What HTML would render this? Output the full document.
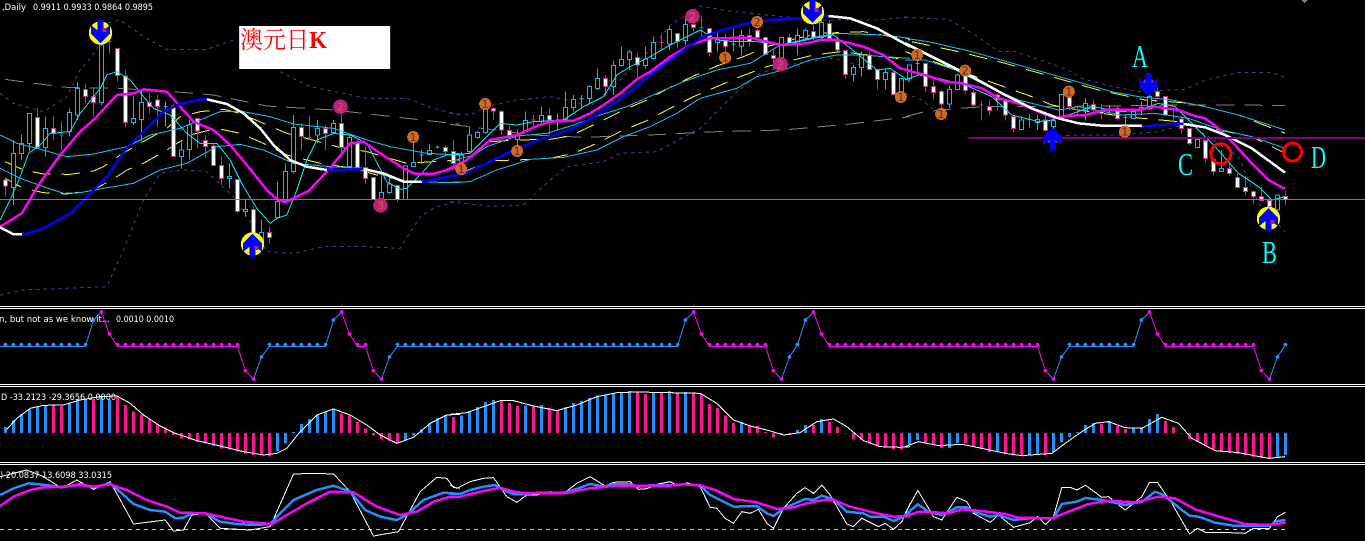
<!DOCTYPE html>
<html><head><meta charset="utf-8"><title>澳元日K</title>
<style>
html,body{margin:0;padding:0;background:#000;width:1365px;height:541px;overflow:hidden}
svg{display:block;position:absolute;left:0;top:0}
path{fill:none;shape-rendering:crispEdges}
.pw{stroke:#ff1493;stroke-width:3}
.bw{stroke:#10b8f8;stroke-width:3}
.pb{stroke:#ff1493;stroke-width:3;fill:#fff}
.bb{stroke:#10b8f8;stroke-width:3;fill:#000}
.fast{stroke:#00e8f0;stroke-width:3}
.env{stroke:#10c0f8;stroke-width:3}
.yel{stroke:#ffff00;stroke-width:3;stroke-dasharray:55 33}
.gry{stroke:#808080;stroke-width:3;stroke-dasharray:55 30}
.pur{stroke:#483d8b;stroke-width:3;stroke-dasharray:10 12}
.mag{stroke:#ff00ff;stroke-width:7.5}
.blu{stroke:#0000ff;stroke-width:7.5}
.wht{stroke:#fff;stroke-width:7.5}
.thin{stroke:#fff;stroke-width:3}
.dodg{stroke:#1e90ff;stroke-width:3}
.pm{stroke:#ff00ff;stroke-width:3}
.dd{stroke:#1e90ff;stroke-width:11;stroke-linecap:round;stroke-dasharray:.01 24}
.dm{stroke:#ff00ff;stroke-width:11;stroke-linecap:round;stroke-dasharray:.01 24}
.hb{stroke:#1e90ff;stroke-width:9}
.hp{stroke:#ff1493;stroke-width:9}
.m2{stroke:#1e90ff;stroke-width:7.5}
.m3{stroke:#ff00ff;stroke-width:7.5}
text{font-family:"DejaVu Sans",sans-serif;font-size:9px;fill:#fff}
.o{fill:#d2691e;shape-rendering:crispEdges}
.k{fill:#bd1f80;shape-rendering:crispEdges}
.n{font-size:33px;text-anchor:middle}
</style></head><body>
<svg width="1365" height="541" viewBox="0 0 1365 541" xmlns="http://www.w3.org/2000/svg">
<defs>
<path id="dn" style="fill:#0000ff;stroke:none" d="M-9-39H9V-8L29-24V1L0 31-29 1V-24L-9-8Z"/>
</defs>
<rect width="1365" height="541" fill="#000"/>

<!-- MAIN zone 1 -->
<g transform="translate(.167 0) scale(.33333)">
<path class="pur" d="M0 280L40 310 130 335 200 290 240 210 290 150 320 70 360 60 430 110 500 148 620 148 700 120"/>
<path class="pur" d="M840 215L930 260 1030 280 1100 295 1220 295 1300 325 1380 345"/>
<path class="pur" d="M0 885L70 870 320 860 370 750 430 600 480 520 550 510 620 515 700 590 760 680 800 755 880 760 970 740 1100 740 1200 745 1260 650 1300 625 1380 600"/>
<path class="gry" d="M15 238L100 250 200 262 355 265 520 275 640 285 800 318 1000 330 1380 373"/>
<path class="yel" d="M15 485L70 510 130 522 210 523 280 513 310 500 360 465 420 430 500 385 540 350 600 335 670 328 720 340 790 370 860 400 900 410 1010 440 1100 455 1220 490 1380 480"/>
<path class="yel" d="M15 535L70 565 130 578 200 582 280 570 350 530 380 510 430 490 500 450 570 405 650 385 720 400 790 430 860 465 960 490 1060 505 1130 525 1230 545"/>
<path class="pw" d="M16 535V590M112 322V445M160 350V420M184 365V450M256 250V310M280 265V350M328 120V160M352 145V245M376 210V382M448 280V340M472 285V380M520 310V470M592 355V445M616 405V473M640 430V500M664 470V555M712 538V640M760 620V740M808 680V730M904 370V452M928 350V420M976 375V450M1024 340V470M1072 420V505M1096 440V552M1120 532V600M1192 557V606M1336 436V460M1360 420V495M178 405h12M322 125h12M922 412h12"/>
<path class="pb" d="M10 540h12V558h-12zM106 352h12V442h-12zM154 385h12V400h-12zM250 268h12V290h-12zM274 290h12V308h-12zM346 145h12V226h-12zM370 228h12V368h-12zM442 308h12V320h-12zM466 300h12V320h-12zM514 318h12V470h-12zM586 355h12V393h-12zM610 422h12V440h-12zM634 438h12V496h-12zM658 496h12V535h-12zM706 538h12V635h-12zM754 628h12V700h-12zM802 697h12V712h-12zM898 382h12V410h-12zM970 385h12V400h-12zM1018 370h12V442h-12zM1066 428h12V502h-12zM1090 503h12V536h-12zM1114 532h12V598h-12zM1186 557h12V598h-12zM1330 443h12V455h-12zM1354 455h12V490h-12z"/>
<path class="bw" d="M40 420V615M64 403V480M88 340V455M136 350V470M208 325V410M232 247V360M304 60V315M400 290V375M424 270V425M496 305V380M544 420V505M568 360V478M688 490V565M736 595V650M784 660V740M832 545V652M856 490V600M880 345V520M952 360V430M1000 360V400M1048 405V500M1144 520V600M1168 530V582M1216 498V600M1240 410V500M1264 450V490M1288 432V463M1312 436V446M490 320h12M1258 465h12M1306 441h12"/>
<path class="bb" d="M34 460h12V562h-12zM58 430h12V460h-12zM82 340h12V430h-12zM130 385h12V442h-12zM202 337h12V395h-12zM226 265h12V345h-12zM298 135h12V308h-12zM394 355h12V368h-12zM418 307h12V358h-12zM538 450h12V470h-12zM562 375h12V448h-12zM682 530h12V535h-12zM730 628h12V635h-12zM778 697h12V730h-12zM826 605h12V652h-12zM850 514h12V600h-12zM874 382h12V514h-12zM946 385h12V405h-12zM994 370h12V397h-12zM1042 412h12V500h-12zM1138 577h12V598h-12zM1162 552h12V578h-12zM1210 498h12V598h-12zM1234 487h12V500h-12zM1282 452h12V463h-12z"/>
<path class="env" d="M0 405L50 430 110 445 200 470 280 462 380 440 450 405 540 385 600 360 660 335 730 335 810 350 880 372 1000 385 1100 420 1170 440 1280 460 1380 465"/>
<path class="env" d="M0 505L60 535 130 560 190 580 240 578 310 565 400 550 480 510 560 490 650 440 720 433 790 450 880 490 990 500 1090 505 1150 525 1220 545 1380 548"/>
<path class="fast" d="M0 660L30 600 60 530 85 460 120 435 150 400 210 395 240 340 300 265 320 225 350 215 390 240 430 290 460 325 510 345 560 400 600 430 650 430 690 480 730 560 770 625 810 670 830 655 860 645 890 570 920 480 950 420 1000 400 1050 405 1100 430 1160 545 1200 568 1220 565 1260 525 1300 480 1340 465 1380 460"/>
<path class="mag" d="M0 680L65 640 115 555 180 465 240 395 285 355 350 285 400 280 430 268 500 275 540 320 580 365 640 390 690 435 740 495 800 570 830 597 855 607 925 573 985 510 1050 430 1090 425 1140 460 1210 505 1245 522 1300 522 1380 497"/>
<path class="wht" d="M0 682L40 703H66"/>
<path class="blu" d="M66 705L130 685 210 640 260 590 320 530 375 450 430 395 490 335 540 312 600 298H620"/>
<path class="wht" d="M620 298L680 312 730 340 780 385 820 435 870 480 920 500 980 510"/>
<path class="blu" d="M980 510L1090 507"/>
<path class="wht" d="M1090 507L1150 520 1210 545H1265"/>
<path class="blu" d="M1265 546L1320 535 1380 523"/>
<path d="M0 598H1380" style="stroke:#78788f;stroke-width:3"/>
<circle class="o" cx="1239" cy="411" r="18"/><text class="n" x="1239" y="423" style="fill:#303848">1</text>
<circle class="k" cx="1021" cy="320" r="22"/><text class="n" x="1021" y="332" style="fill:#d2691e">2</text>
<circle class="k" cx="1141" cy="616" r="22"/><text class="n" x="1141" y="628" style="fill:#d2691e">3</text>
<circle cx="301" cy="99" r="35" style="fill:#ffff00;shape-rendering:crispEdges"/>
<use href="#dn" transform="translate(301 99)"/>
<rect x="307" y="84" width="12" height="12" fill="#bd1f80"/>
<circle cx="757" cy="732" r="35" style="fill:#ffff00;shape-rendering:crispEdges"/>
<use href="#dn" transform="translate(757 732) scale(1 -1)"/>
<rect x="763" y="738" width="12" height="12" fill="#bd1f80"/>
<rect x="717" y="78" width="453" height="129" fill="#fff"/>
</g>

<!-- MAIN zone 2 -->
<g transform="translate(450.167 0) scale(.33333)">
<path class="pur" d="M0 340L60 345 110 320 200 300 300 290 350 300 420 320 500 250 600 150 660 75 750 18 850 35 1000 50 1100 60 1280 60 1380 50"/>
<path class="pur" d="M0 605L130 620 220 615 300 540 350 500 460 485 510 460 620 455 750 385 850 285 930 220 1010 195 1150 175 1250 200"/>
<path class="gry" d="M0 373L40 378 250 405 400 412 600 405 800 395 1000 390 1200 372 1380 350"/>
<path class="yel" d="M40 515L130 482 200 480 300 475 370 460 440 430 510 395 590 362 660 325 730 290 800 260 870 230 950 200 1090 165 1170 155 1300 170 1380 180"/>
<path class="yel" d="M120 425L200 420 300 418 360 408 440 370 520 330 590 300 660 262 730 228 800 198 880 170 950 140 1040 115 1110 100 1240 95 1380 120"/>
<path class="pw" d="M130 322V360M154 330V405M178 378V420M298 325V405M250 345V382M466 225V290M562 160V240M634 100V150M682 100V145M730 60V95M754 50V115M778 85V170M826 100V170M898 85V140M922 85V115M946 110V165M970 145V205M1018 102V135M1090 75V120M1138 60V118M1162 110V155M1186 150V235M1258 155V212M1282 208V268M1330 215V287M244 360h12M628 128h12M748 82h12"/>
<path class="pb" d="M124 325h12V333h-12zM148 335h12V390h-12zM172 392h12V407h-12zM292 347h12V360h-12zM460 235h12V260h-12zM556 173h12V195h-12zM676 100h12V125h-12zM724 73h12V82h-12zM772 85h12V157h-12zM820 122h12V140h-12zM892 106h12V125h-12zM916 92h12V112h-12zM940 113h12V163h-12zM964 167h12V175h-12zM1012 113h12V130h-12zM1084 95h12V113h-12zM1132 70h12V115h-12zM1156 125h12V150h-12zM1180 152h12V223h-12zM1252 165h12V208h-12zM1276 208h12V238h-12zM1324 218h12V283h-12z"/>
<path class="bw" d="M34 455V495M58 380V460M82 393V415M106 320V400M202 388V450M226 335V398M274 320V370M322 340V392M346 275V360M370 285V335M394 285V325M418 255V310M442 205V270M490 182V285M514 140V200M538 150V210M586 140V205M610 110V180M658 80V150M706 55V135M802 95V155M850 85V155M874 90V165M994 112V175M1042 85V165M1066 85V120M1114 60V115M1210 195V245M1234 155V230M1306 208V268M1354 236V300M1378 195V240M316 360h12M388 295h12M844 132h12"/>
<path class="bb" d="M28 465h12V490h-12zM52 405h12V455h-12zM76 397h12V412h-12zM100 325h12V398h-12zM196 405h12V418h-12zM220 362h12V395h-12zM268 347h12V365h-12zM340 322h12V358h-12zM364 298h12V322h-12zM412 260h12V295h-12zM436 235h12V265h-12zM484 196h12V260h-12zM508 178h12V196h-12zM532 156h12V178h-12zM580 177h12V196h-12zM604 127h12V176h-12zM652 88h12V132h-12zM700 73h12V122h-12zM796 120h12V128h-12zM868 106h12V138h-12zM988 112h12V172h-12zM1036 106h12V130h-12zM1060 92h12V114h-12zM1108 68h12V113h-12zM1204 203h12V223h-12zM1228 165h12V203h-12zM1300 218h12V238h-12zM1348 236h12V280h-12zM1372 195h12V236h-12z"/>
<path class="env" d="M0 485L70 465 110 440 200 408 290 400 370 375 450 345 530 320 620 280 700 245 800 210 900 190 990 135 1100 110 1160 100 1300 105 1380 115"/>
<path class="env" d="M0 547L60 545 140 510 240 478 340 472 440 450 520 410 600 380 680 340 750 295 860 265 920 230 1000 210 1080 180 1160 165 1240 165 1300 170 1380 175"/>
<path class="fast" d="M0 465L60 460 100 420 150 370 200 375 250 365 340 360 400 320 460 290 500 225 540 200 600 170 660 135 750 90 800 120 850 125 920 125 1000 135 1090 115 1150 105 1220 160 1280 210 1320 205 1380 245"/>
<path class="mag" d="M0 505L50 480 120 420 200 405 260 378 300 365 370 362 420 340 460 315 510 280 560 238 600 215 660 170 720 135 780 115 900 113 950 125 990 135 1070 130 1110 120 1160 120 1240 140 1300 165 1350 205 1380 212"/>
<path class="blu" d="M0 530L40 522 120 485 200 445 280 415 360 390 440 345 520 290 600 225 680 165 750 115 800 95 880 72 960 60 1060 55 1135 48"/>
<path class="wht" d="M1135 48L1200 55 1280 85 1380 140"/>
<path d="M0 598H1380" style="stroke:#78788f;stroke-width:3"/>
<circle class="o" cx="105" cy="312" r="18"/><text class="n" x="105" y="324" style="fill:#303848">1</text>
<circle class="o" cx="33" cy="507" r="18"/><text class="n" x="33" y="519" style="fill:#303848">1</text>
<circle class="o" cx="201" cy="453" r="18"/><text class="n" x="201" y="465" style="fill:#303848">1</text>
<circle class="o" cx="825" cy="173" r="18"/><text class="n" x="825" y="185" style="fill:#303848">1</text>
<circle class="o" cx="921" cy="66" r="18"/><text class="n" x="921" y="78" style="fill:#303848">2</text>
<circle class="o" cx="1352" cy="291" r="18"/><text class="n" x="1352" y="303" style="fill:#303848">1</text>
<circle class="k" cx="727" cy="49" r="22"/><text class="n" x="727" y="61" style="fill:#d2691e">2</text>
<circle class="k" cx="991" cy="193" r="22"/><text class="n" x="991" y="205" style="fill:#d2691e">2</text>
<circle cx="1087" cy="38" r="35" style="fill:#ffff00;shape-rendering:crispEdges"/>
<use href="#dn" transform="translate(1087 38)"/>
<rect x="1093" y="24" width="12" height="12" fill="#bd1f80"/>
</g>

<!-- MAIN zone 3 -->
<g transform="translate(905.167 0) scale(.33333)">
<path class="pur" d="M0 52L130 58 210 105 280 155 330 155 420 185 490 210 530 235 600 255 700 275 840 268 900 240 1000 218 1100 218 1140 233"/>
<path class="pur" d="M0 280L50 300 100 340M440 410L510 405 640 405 760 395 850 370 1000 470 1060 610 1140 695"/>
<path class="gry" d="M0 350L60 335 160 325 240 320 330 320 420 320 830 315 1140 316"/>
<path class="yel" d="M20 125L160 155 300 190 440 230 580 270 720 300 860 310 1000 345 1140 400"/>
<path class="yel" d="M0 155L100 190 240 240 380 290 440 315 520 330 660 350 820 365 1040 410 1130 455"/>
<path class="pw" d="M61 190V275M85 230V297M109 270V325M181 210V280M205 270V325M229 305V362M253 300V345M277 280V330M301 300V362M325 345V398M421 335V395M493 293V330M517 315V345M565 298V345M589 312V358M637 315V358M757 265V295M781 290V347M805 325V370M829 350V400M853 385V435M901 420V488M925 478V527M973 490V527M997 520V565M1021 528V585M1045 572V612M1069 560V605M1093 600V650M1141 572V615M223 315h12M511 328h12M799 348h12"/>
<path class="pb" d="M55 190h12V260h-12zM79 260h12V277h-12zM103 275h12V312h-12zM175 225h12V272h-12zM199 277h12V315h-12zM247 320h12V332h-12zM271 285h12V300h-12zM295 300h12V345h-12zM319 350h12V385h-12zM415 360h12V392h-12zM487 293h12V320h-12zM559 313h12V330h-12zM583 335h12V340h-12zM631 325h12V355h-12zM751 275h12V290h-12zM775 290h12V345h-12zM823 357h12V385h-12zM847 385h12V430h-12zM895 422h12V475h-12zM919 478h12V514h-12zM967 506h12V520h-12zM991 532h12V562h-12zM1015 562h12V575h-12zM1039 575h12V590h-12zM1063 590h12V602h-12zM1087 602h12V620h-12zM1135 590h12V598h-12z"/>
<path class="bw" d="M37 165V215M133 255V322M157 220V270M349 350V390M373 342V382M397 345V390M445 355V385M469 283V360M541 295V362M613 315V345M661 345V378M685 325V358M709 305V345M733 280V330M877 418V442M949 452V515M1117 585V630M31 190h12M367 358h12M607 330h12M655 352h12"/>
<path class="bb" d="M127 268h12V312h-12zM151 225h12V268h-12zM343 360h12V388h-12zM391 358h12V367h-12zM439 362h12V380h-12zM463 283h12V352h-12zM535 310h12V332h-12zM679 335h12V355h-12zM703 322h12V330h-12zM727 290h12V325h-12zM871 418h12V442h-12zM943 506h12V514h-12zM1111 585h12V630h-12z"/>
<path class="env" d="M0 115L70 125 200 155 340 195 480 235 620 275 700 290 800 300 900 320 1000 345 1140 390"/>
<path class="env" d="M0 180L60 180 150 210 250 260 340 300 460 330 520 320 650 345 750 340 850 355 950 390 1040 410 1140 445"/>
<path class="fast" d="M0 240L40 225 100 235 180 255 260 290 320 345 400 365 440 360 490 345 560 320 650 335 700 330 760 310 810 320 860 370 930 440 1000 520 1060 560 1100 600 1140 590"/>
<path class="mag" d="M0 210L60 225 120 245 170 250 230 265 280 295 340 310 400 335 450 355 480 348 540 345 600 330 700 330 750 320 820 330 860 345 900 355 940 385 980 425 1040 490 1090 540 1140 567"/>
<path class="wht" d="M0 130L100 180 200 230 300 285 380 325 460 355 520 370 600 378H710"/>
<path class="blu" d="M710 380L800 372H835"/>
<path class="wht" d="M835 372L900 382 960 405 1040 445 1140 518"/>
<path d="M0 598H1380" style="stroke:#78788f;stroke-width:3"/>
<path d="M190 414H1380" style="stroke:#800080;stroke-width:6"/>
<circle class="o" cx="36" cy="165" r="18"/><text class="n" x="36" y="177" style="fill:#303848">1</text>
<circle class="o" cx="180" cy="212" r="18"/><text class="n" x="180" y="224" style="fill:#303848">2</text>
<circle class="o" cx="108" cy="342" r="18"/><text class="n" x="108" y="354" style="fill:#303848">1</text>
<circle class="o" cx="491" cy="275" r="18"/><text class="n" x="491" y="287" style="fill:#303848">1</text>
<circle class="o" cx="659" cy="395" r="18"/><text class="n" x="659" y="407" style="fill:#303848">1</text>
<circle class="k" cx="442" cy="412" r="20"/>
<use href="#dn" transform="translate(442 412) scale(1 -1)"/>
<circle class="k" cx="730" cy="255" r="20"/>
<use href="#dn" transform="translate(730 258)"/>
<circle cx="1090" cy="655" r="35" style="fill:#ffff00;shape-rendering:crispEdges"/>
<use href="#dn" transform="translate(1090 655) scale(1 -1)"/>
<rect x="1096" y="660" width="12" height="12" fill="#bd1f80"/>
<circle cx="947" cy="461" r="30" style="fill:none;stroke:#ff0000;stroke-width:9;shape-rendering:crispEdges"/>
<circle cx="1162" cy="456" r="27" style="fill:none;stroke:#ff0000;stroke-width:9;shape-rendering:crispEdges"/>
<path style="fill:#708090;stroke:none" d="M1188 0H1208L1198 10Z"/>
</g>

<!-- Lower panes zone 1 -->
<g transform="translate(.167 300) scale(.33333)">
<path class="dodg" d="M0 139H256L280 60 303 36"/>
<path class="pm" d="M303 36L328 102 352 139H712L736 212 760 237"/>
<path class="dodg" d="M760 237L784 171 808 139H976L1000 60 1024 36"/>
<path class="pm" d="M1024 36L1048 102 1072 139H1096L1120 212 1144 237"/>
<path class="dodg" d="M1144 237L1168 171 1192 139H1380"/>
<path class="dd" d="M16 134H257M280 60h.1M784 171h.1M808 134H977M1000 60h.1M1168 171h.1M1192 134H1380"/>
<path class="dm" d="M304 36h.1M328 102h.1M352 134H713M736 212h.1M760 237h.1M1024 36h.1M1048 102h.1M1072 134H1097M1120 212h.1M1144 237h.1"/>
<path class="hb" d="M16 399V381M40 399V360M64 399V342M88 399V327M112 399V320M136 399V315M208 399V310M232 399V298M256 399V295M304 399V290M328 399V298M832 399V453M856 399V430M880 399V396M904 399V372M928 399V357M952 399V344M976 399V336M1000 399V327M1216 399V420M1240 399V407M1264 399V388M1288 399V370M1312 399V354M1336 399V345"/>
<path class="hp" d="M160 399V315M184 399V318M280 399V298M352 399V288M376 399V315M400 399V335M424 399V343M448 399V358M472 399V372M496 399V382M520 399V405M544 399V415M568 399V419M592 399V426M616 399V431M640 399V438M664 399V446M688 399V449M712 399V455M736 399V461M760 399V465M784 399V467M808 399V470M1024 399V340M1048 399V347M1072 399V366M1096 399V386M1120 399V407M1144 399V419M1168 399V423M1192 399V431M1360 399V351"/>
<path class="thin" d="M20 388L50 355 90 325 130 316 190 315 240 300 300 290 350 288 390 310 430 345 480 378 520 398 590 422 660 438 730 455 790 465 830 460 860 445 900 395 950 345 1000 327 1050 345 1100 375 1140 405 1190 430 1240 412 1290 370 1340 345 1380 343"/>
<path d="M0 688H1380" style="stroke:#c8c8c8;stroke-width:3;stroke-dasharray:12 12"/>
<path class="thin" d="M0 530L80 510 130 530 185 565 230 540 280 568 330 545 355 590 400 672 495 660 520 693 550 690 575 645 615 640 660 685 750 690 810 680 850 590 880 522 940 520 1000 522 1050 575 1120 708 1195 695 1260 575 1310 532 1340 535 1360 562 1380 565"/>
<path class="m2" d="M0 585L40 565 85 550 135 555 185 562 240 552 280 562 330 550 365 580 400 612 450 630 495 635 525 655 550 653 575 640 615 640 660 665 710 672 760 675 810 672 840 640 880 600 950 570 1000 557 1050 575 1095 630 1140 650 1190 660 1220 645 1270 600 1330 578 1380 582"/>
<path class="m3" d="M0 618L40 590 90 570 130 562 185 560 240 555 280 560 330 553 380 570 440 600 500 620 540 638 615 640 660 650 730 665 815 672 860 645 920 610 990 575 1060 577 1130 620 1200 645 1250 635 1300 605 1350 590 1380 590"/>
</g>

<!-- Lower panes zone 2 -->
<g transform="translate(450.167 300) scale(.33333)">
<path class="dodg" d="M0 139H682L706 60 730 36"/>
<path class="pm" d="M730 36L754 102 778 139H946L970 212 994 237"/>
<path class="dodg" d="M994 237L1018 171 1042 134 1066 60 1090 36"/>
<path class="pm" d="M1090 36L1114 102 1138 139H1380"/>
<path class="dd" d="M10 134H683M706 60h.1M1018 171h.1M1042 134h.1M1066 60h.1"/>
<path class="dm" d="M730 36h.1M754 102h.1M778 134H947M970 212h.1M994 237h.1M1090 36h.1M1114 102h.1M1138 134H1380"/>
<path class="hb" d="M34 399V347M58 399V333M82 399V321M106 399V306M130 399V300M226 399V317M274 399V315M346 399V321M370 399V309M394 399V303M418 399V294M442 399V286M466 399V285M490 399V280M514 399V276M538 399V273M610 399V276M658 399V273M706 399V276M874 399V366M994 399V402M1042 399V390M1066 399V375M1114 399V357M1378 399V435"/>
<path class="hp" d="M10 399V351M154 399V300M178 399V309M202 399V318M250 399V318M298 399V324M322 399V332M562 399V278M586 399V282M634 399V276M682 399V279M730 399V278M754 399V282M778 399V312M802 399V324M826 399V347M850 399V369M898 399V378M922 399V378M946 399V396M970 399V413M1018 399V405M1090 399V375M1138 399V366M1162 399V381M1186 399V401M1210 399V417M1234 399V420M1258 399V431M1282 399V439M1306 399V442M1330 399V449M1354 399V449"/>
<path class="thin" d="M0 343L50 338 100 320 150 302 190 302 250 318 320 332 380 315 440 290 500 278 560 276 750 280 800 310 850 360 900 378 950 390 1000 405 1050 398 1100 365 1150 357 1190 380 1240 422 1290 440 1350 442 1380 440"/>
<path d="M0 688H1380" style="stroke:#c8c8c8;stroke-width:3;stroke-dasharray:12 12"/>
<path class="thin" d="M0 555L20 565 60 545 100 535 130 533 170 590 200 607 230 585 260 585 300 575 340 580 380 550 420 530 465 558 490 547 540 545 565 568 590 566 620 553 660 545 685 558 710 548 750 560 780 622 800 625 825 655 850 670 875 635 900 640 925 628 950 670 970 685 1000 625 1040 580 1065 563 1090 580 1115 555 1140 585 1190 672 1210 680 1235 655 1285 680 1305 670 1330 688 1355 665 1380 610"/>
<path class="m2" d="M0 582L30 582 60 570 100 560 135 555 160 570 190 583 230 582 270 578 340 578 370 570 420 552 465 560 490 552 540 553 565 560 600 556 660 556 700 553 750 556 780 585 810 600 850 620 920 618 950 640 970 648 1000 626 1040 608 1065 597 1090 600 1115 587 1150 598 1190 635 1240 640 1260 650 1300 650 1330 663 1350 655 1380 635"/>
<path class="m3" d="M0 592L30 590 90 575 150 563 190 575 230 580 340 580 420 565 490 558 660 557 700 553 750 556 800 572 850 597 920 607 980 627 1030 622 1070 610 1120 600 1150 600 1200 620 1280 640 1330 650 1380 648"/>
</g>

<!-- Lower panes zone 3 -->
<g transform="translate(905.167 300) scale(.33333)">
<path class="pm" d="M0 139H397L421 212 445 237"/>
<path class="dodg" d="M445 237L469 171 493 139H685L709 60 733 36"/>
<path class="pm" d="M733 36L757 102 781 139H1045L1069 212 1093 237"/>
<path class="dodg" d="M1093 237L1117 171 1141 134"/>
<path class="dd" d="M469 171h.1M493 134H686M709 60h.1M1117 171h.1M1141 134h.1"/>
<path class="dm" d="M13 134H398M421 212h.1M445 237h.1M733 36h.1M757 102h.1M781 134H1046M1069 212h.1M1093 237h.1"/>
<path class="hb" d="M37 399V420M133 399V444M157 399V429M277 399V453M373 399V465M397 399V465M445 399V456M469 399V426M493 399V411M517 399V396M541 399V375M565 399V369M613 399V363M685 399V384M709 399V381M733 399V357M757 399V342M1117 399V471M1141 399V465M13 399V435"/>
<path class="hp" d="M61 399V429M85 399V435M109 399V444M181 399V429M205 399V441M229 399V447M253 399V456M301 399V462M325 399V467M349 399V468M421 399V465M589 399V372M637 399V378M661 399V387M781 399V363M805 399V381M829 399V401M853 399V417M877 399V426M901 399V438M925 399V447M949 399V456M973 399V456M997 399V462M1021 399V465M1045 399V471M1069 399V474M1093 399V477"/>
<path class="thin" d="M0 440L40 425 100 437 170 433 230 445 300 460 350 467 440 460 480 430 530 395 570 370 610 365 660 383 710 385 770 352 820 370 860 415 930 452 1000 458 1090 475 1140 470"/>
<path d="M0 688H1140" style="stroke:#c8c8c8;stroke-width:3;stroke-dasharray:12 12"/>
<path class="thin" d="M0 640L38 571 85 650 110 660 155 592 185 605 205 640 255 667 280 645 325 682 375 668 397 650 421 673 445 650 470 562 495 562 515 570 541 556 590 592 610 590 660 630 710 590 733 547 757 547 800 610 853 702 877 685 901 697 950 697 1020 700 1045 685 1093 685 1117 650 1141 637"/>
<path class="m2" d="M0 645L38 613 70 635 110 645 155 622 185 622 205 635 255 650 280 645 325 660 375 655 445 655 470 612 515 605 541 594 590 600 660 615 710 605 750 575 775 585 830 630 853 647 880 650 930 668 990 678 1090 678 1117 663 1141 660"/>
<path class="m3" d="M0 650L40 635 90 637 130 640 170 628 220 632 300 642 340 653 440 655 490 635 550 612 610 602 690 607 760 590 810 595 870 628 950 652 1020 672 1090 675 1141 668"/>
</g>

<!-- separators -->
<rect x="0" y="306" width="1365" height="1" fill="#fff"/><rect x="0" y="308" width="1365" height="1" fill="#fff"/>
<rect x="0" y="384" width="1365" height="1" fill="#fff"/><rect x="0" y="386" width="1365" height="1" fill="#fff"/>
<rect x="0" y="462" width="1365" height="1" fill="#fff"/><rect x="0" y="464" width="1365" height="1" fill="#fff"/>

<!-- text -->
<text x="2" y="10" textLength="24" lengthAdjust="spacingAndGlyphs">,Daily</text>
<text x="33" y="10" textLength="120" lengthAdjust="spacingAndGlyphs">0.9911 0.9933 0.9864 0.9895</text>
<text x="-1" y="322" textLength="111" lengthAdjust="spacingAndGlyphs">n, but not as we know it...</text>
<text x="116" y="322" textLength="58" lengthAdjust="spacingAndGlyphs">0.0010 0.0010</text>
<text x="1" y="400" textLength="115" lengthAdjust="spacingAndGlyphs">D -33.2123 -29.3656 0.0000</text>
<text x="0" y="478" textLength="112" lengthAdjust="spacingAndGlyphs">) 20.0837 13.6098 33.0315</text>
<text x="240" y="48" textLength="87" lengthAdjust="spacingAndGlyphs" style="font-family:'Liberation Serif','Noto Serif CJK SC',serif;font-size:24px;fill:#ff0000">澳元日<tspan style="font-weight:bold">K</tspan></text>
<text x="1132" y="67" textLength="16" lengthAdjust="spacingAndGlyphs" style="font-family:'Liberation Serif',serif;font-size:32px;fill:#00ffff">A</text>
<text x="1262" y="263" textLength="15" lengthAdjust="spacingAndGlyphs" style="font-family:'Liberation Serif',serif;font-size:32px;fill:#00ffff">B</text>
<text x="1178" y="175" textLength="15" lengthAdjust="spacingAndGlyphs" style="font-family:'Liberation Serif',serif;font-size:32px;fill:#00ffff">C</text>
<text x="1311" y="168" textLength="15" lengthAdjust="spacingAndGlyphs" style="font-family:'Liberation Serif',serif;font-size:32px;fill:#00ffff">D</text>
</svg>
</body></html>
